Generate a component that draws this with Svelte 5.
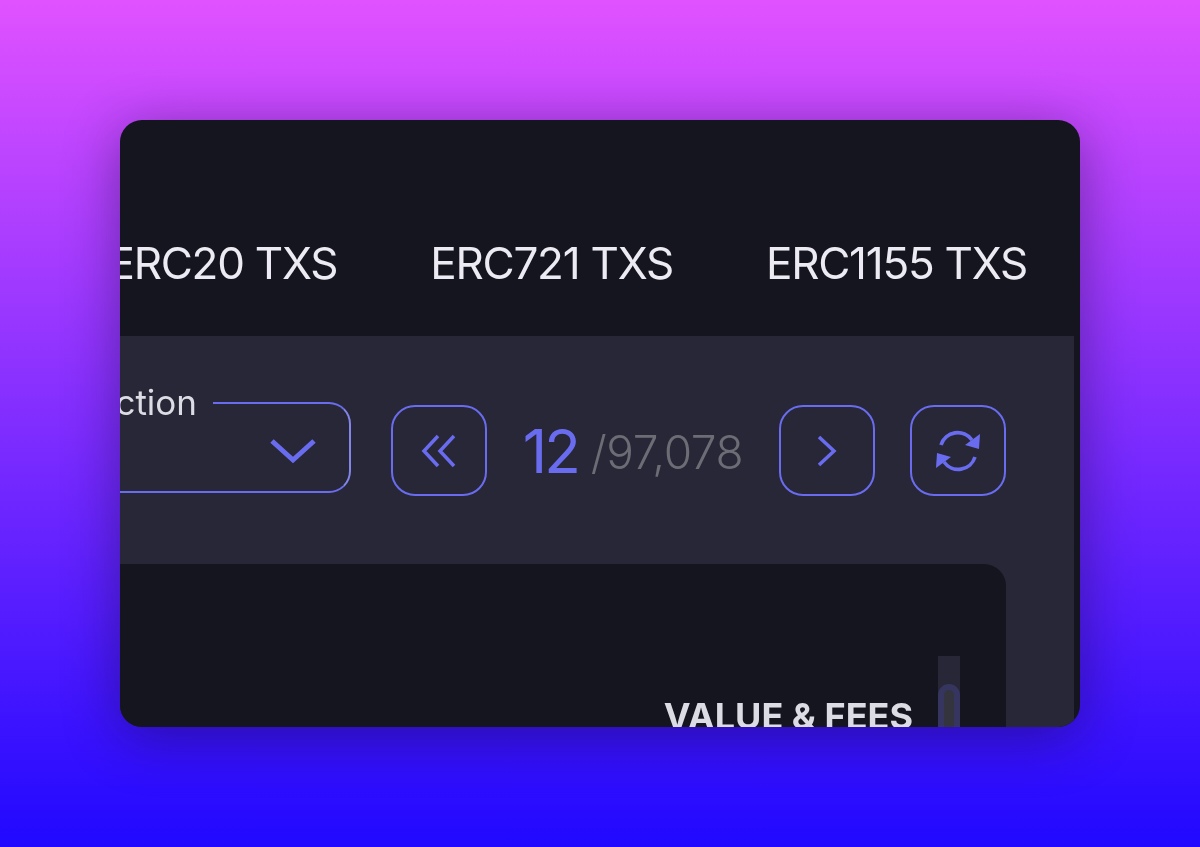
<script>
  const tabs = ['ERC20 TXS', 'ERC721 TXS', 'ERC1155 TXS'];
</script>

<div class="page">
  <div class="card">
    <div class="tabs">
      {#each tabs as tab}
        <span class="tab">{tab}</span>
      {/each}
    </div>

    <div class="panel">
      <div class="toolbar">
        <div class="select">
          <span class="select__label">Section</span>
          <svg class="select__arrow" width="48" height="26" viewBox="0 0 48 26" fill="none">
            <path d="M3 3 L24 22 L45 3" stroke="#6a6cf0" stroke-width="5" />
          </svg>
        </div>

        <button class="btn" aria-label="First page">
          <svg width="36" height="34" viewBox="0 0 36 34" fill="none" stroke="#6a6cf0" stroke-width="3.5">
            <path d="M17 2 L3 17 L17 32" />
            <path d="M33 2 L19 17 L33 32" />
          </svg>
        </button>

        <div class="pager">
          <span class="pager__current">12</span>
          <span class="pager__total">/97,078</span>
        </div>

        <button class="btn" aria-label="Next page">
          <svg width="20" height="32" viewBox="0 0 20 32" fill="none" stroke="#6a6cf0" stroke-width="3.5">
            <path d="M2 2 L17 16 L2 30" />
          </svg>
        </button>

        <button class="btn" aria-label="Refresh">
          <svg width="46" height="44" viewBox="0 0 46 44" fill="none">
            <path d="M6 16 A17.5 17.5 0 0 1 37 11" stroke="#6a6cf0" stroke-width="3.6" />
            <path d="M40 28 A17.5 17.5 0 0 1 9 33" stroke="#6a6cf0" stroke-width="3.6" />
            <path d="M45 5 L44 20 L30 16 Z" fill="#6a6cf0" />
            <path d="M1 39 L2 24 L16 28 Z" fill="#6a6cf0" />
          </svg>
        </button>
      </div>

      <div class="table">
        <div class="table__head">
          <span class="table__title">VALUE &amp; FEES</span>
          <div class="scroll">
            <div class="scroll__thumb"></div>
          </div>
        </div>
      </div>
    </div>
  </div>
</div>

<style>
  :global(body) {
    margin: 0;
  }

  .page {
    height: 847px;
    box-sizing: border-box;
    padding: 120px;
    background: linear-gradient(180deg, #e052ff 0%, #2008ff 100%);
    font-family: 'Inter', 'Liberation Sans', sans-serif;
  }

  .card {
    height: 607px;
    border-radius: 22px;
    background: #14151e;
    overflow: hidden;
    box-shadow: 0 10px 55px rgba(20, 10, 50, 0.45);
  }

  .tabs {
    height: 216px;
    box-sizing: border-box;
    padding: 70px 53px 0 0;
    display: flex;
    justify-content: flex-end;
    align-items: center;
    gap: 93px;
    filter: blur(0.55px);
  }
  .tab {
    font-size: 44px;
    line-height: 1;
    color: #ecebf3;
    white-space: nowrap;
    letter-spacing: -1.25px;
    flex-shrink: 0;
  }

  .panel {
    height: 391px;
    margin-right: 6px;
    background: #272737;
    overflow: hidden;
    display: flex;
    flex-direction: column;
  }

  .toolbar {
    height: 228px;
    flex-shrink: 0;
    box-sizing: border-box;
    padding: 66px 68px 0 0;
    display: flex;
    justify-content: flex-end;
    align-items: flex-start;
    filter: blur(0.55px);
  }

  .select {
    position: relative;
    width: 300px;
    height: 91px;
    flex-shrink: 0;
    box-sizing: border-box;
    border: 2.5px solid #6a6cf0;
    border-right-color: #8385e8;
    border-radius: 22px;
    margin-right: 40px;
    display: flex;
    justify-content: flex-end;
    align-items: center;
    padding-right: 32px;
  }
  .select__label {
    position: absolute;
    top: -22px;
    right: 136px;
    padding: 0 16px;
    background: #272737;
    color: #dcdce4;
    font-size: 35px;
    line-height: 40px;
  }
  .select__arrow {
    margin-top: 6px;
  }

  .btn {
    width: 96px;
    height: 91px;
    margin-top: 3px;
    flex-shrink: 0;
    padding: 0;
    box-sizing: border-box;
    background: none;
    border: 2.5px solid #6a6cf0;
    border-radius: 24px;
    display: flex;
    justify-content: center;
    align-items: center;
  }
  .btn + .btn {
    margin-left: 35px;
  }

  .pager {
    width: 292px;
    height: 91px;
    margin-top: 3px;
    flex-shrink: 0;
    box-sizing: border-box;
    display: flex;
    align-items: center;
    justify-content: center;
    gap: 13px;
  }
  .pager__current {
    font-size: 60px;
    font-weight: 400;
    letter-spacing: -3px;
    color: #6a6cf0;
  }
  .pager__total {
    font-size: 46px;
    font-weight: 300;
    letter-spacing: -0.4px;
    color: #6c6c75;
    margin-top: 3px;
  }

  .table {
    flex: 1;
    margin-right: 68px;
    background: #14151e;
    border-radius: 0 22px 0 0;
  }
  .table__head {
    box-sizing: border-box;
    padding: 92px 46px 0 0;
    display: flex;
    justify-content: flex-end;
    gap: 25px;
  }
  .table__title {
    margin-top: 38px;
    font-size: 36px;
    font-weight: 700;
    line-height: 44px;
    color: #dcdce4;
    white-space: nowrap;
    filter: blur(0.7px);
  }
  .scroll {
    width: 22px;
    height: 90px;
    background: #272737;
    padding-top: 28px;
    box-sizing: border-box;
    flex-shrink: 0;
  }
  .scroll__thumb {
    height: 100px;
    box-sizing: border-box;
    border: 6px solid #35355f;
    border-radius: 11px 11px 0 0;
    background: #34343e;
  }
</style>
